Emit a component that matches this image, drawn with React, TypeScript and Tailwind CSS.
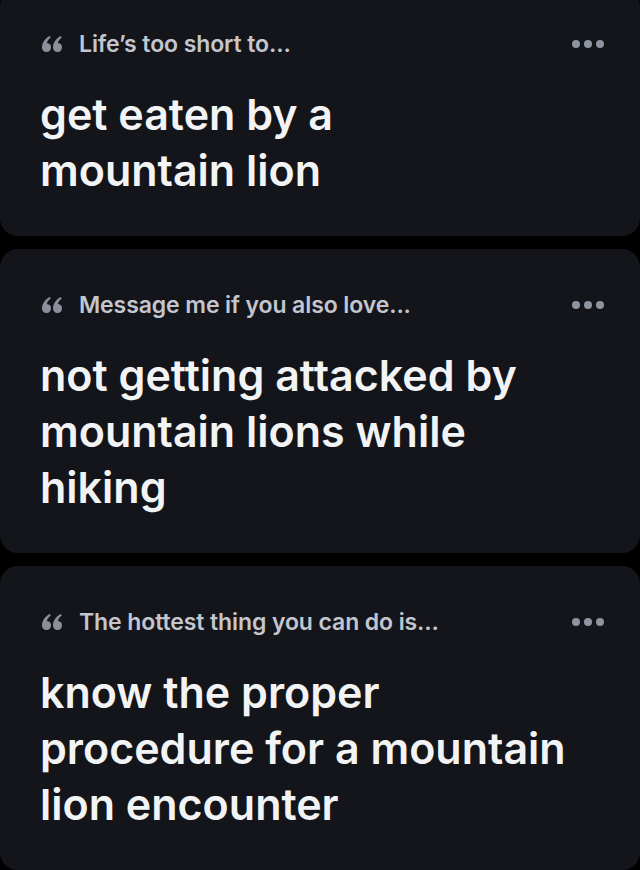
const prompts = [
  { label: "Life’s too short to...", answer: "get eaten by a mountain lion", width: "max-w-[480px]" },
  { label: "Message me if you also love...", answer: "not getting attacked by mountain lions while hiking", width: "max-w-[530px]" },
  { label: "The hottest thing you can do is...", answer: "know the proper procedure for a mountain lion encounter", width: "max-w-[530px]" },
];

function QuoteMark() {
  return (
    <svg width="21" height="16" viewBox="0 0 21 16" className="ml-0.5 shrink-0">
      <g fill="#8b8f99">
        <path d="M4.6 16a4.4 4.4 0 0 1-4.6-4.5C0 6.8 3 2.6 7.6 0l1.3 1.6C6.4 3.4 5.2 5.2 4.9 7.1a4.4 4.4 0 0 1 4.1 4.4A4.4 4.4 0 0 1 4.6 16z" />
        <path d="M15.6 16a4.4 4.4 0 0 1-4.6-4.5c0-4.7 3-8.9 7.6-11.5l1.3 1.6c-2.5 1.8-3.7 3.6-4 5.5a4.4 4.4 0 0 1 4.1 4.4 4.4 4.4 0 0 1-4.4 4.5z" />
      </g>
    </svg>
  );
}

function PromptCard({ label, answer, width, first }: { label: string; answer: string; width: string; first?: boolean }) {
  return (
    <div className={`rounded-[18px] bg-[#13151a] pl-10 pr-9 pt-11 pb-[38px] ${first ? "-mt-3" : ""}`}>
      <div className="flex h-6 items-center justify-between">
        <div className="flex items-center gap-4">
          <QuoteMark />
          <span className="text-[23px] font-semibold leading-6 tracking-[-0.1px] text-[#c3c6ce]">{label}</span>
        </div>
        <div className="flex items-center gap-1">
          <span className="h-2 w-2 rounded-full bg-[#8f95a0]" />
          <span className="h-2 w-2 rounded-full bg-[#8f95a0]" />
          <span className="h-2 w-2 rounded-full bg-[#8f95a0]" />
        </div>
      </div>
      <p className={`mt-[30px] ${width} text-[43px] font-semibold leading-[56px] text-[#f2f3f5]`}>
        {answer}
      </p>
    </div>
  );
}

export default function App() {
  return (
    <div className="h-[870px] w-[640px] overflow-hidden bg-black font-['Inter','Noto_Sans',sans-serif]">
      <div className="flex flex-col gap-[13px]">
        {prompts.map((p, i) => (
          <PromptCard key={i} label={p.label} answer={p.answer} width={p.width} first={i === 0} />
        ))}
      </div>
    </div>
  );
}
